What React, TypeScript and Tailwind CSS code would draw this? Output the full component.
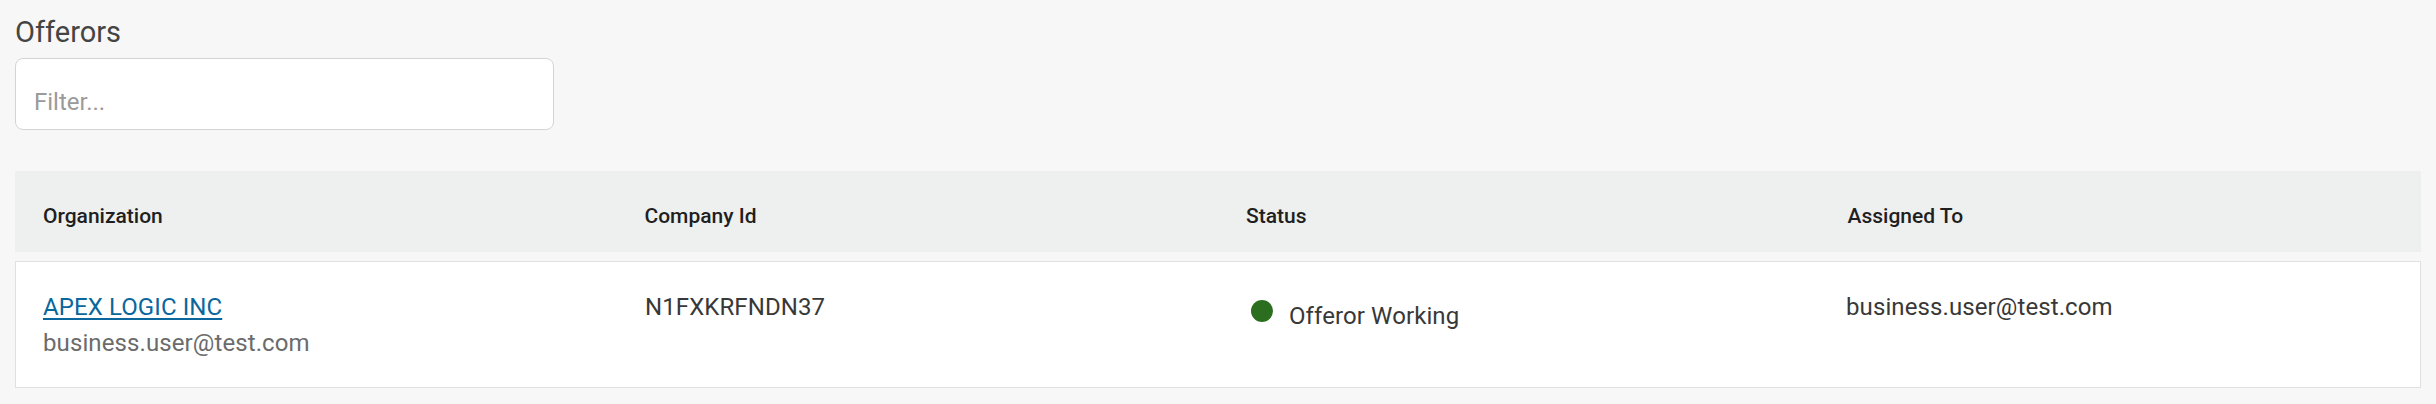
const font = { fontFamily: 'Roboto, "Noto Sans", sans-serif' };

const columns = ['Organization', 'Company Id', 'Status', 'Assigned To'];

export default function App() {
  return (
    <div className="min-h-[404px] w-full bg-[#f7f7f7] px-[15px] pt-[14px]" style={font}>
      <h1 className="text-[29px] leading-[36px] font-normal text-[#444]">Offerors</h1>
      <input
        type="text"
        placeholder="Filter..."
        className="mt-[8px] block h-[72px] w-[539px] rounded-[8px] border border-[#d4d4d4] bg-white pl-[18px] pt-[16px] text-[24px] text-[#333] placeholder:text-[#9a9a9a] outline-none"
      />

      <div className="mt-[41px] grid h-[81px] grid-cols-4 bg-[#eef0ef]">
        {columns.map(c => (
          <div key={c} className="pl-[28px] pt-[29px] text-[21px] leading-[32px] font-medium text-[#1f1f1f]">
            {c}
          </div>
        ))}
      </div>

      <div className="mt-[9px] grid h-[127px] grid-cols-4 border border-[#e0e0e0] bg-white text-[24px] leading-[36px] tracking-[0.1px]">
        <div className="pl-[27px] pt-[27px]">
          <a href="#" className="text-[#0a679c] underline underline-offset-[3px] decoration-[2px]">
            APEX LOGIC INC
          </a>
          <div className="text-[#6b6b6b]">business.user@test.com</div>
        </div>
        <div className="pl-[28px] pt-[27px] text-[#383838]">N1FXKRFNDN37</div>
        <div className="flex items-start pl-[33px] pt-[27px]">
          <span className="mt-[11px] h-[22px] w-[22px] shrink-0 rounded-full bg-[#2b6e1f]" />
          <span className="ml-[16px] mt-[9px] text-[#383838]">Offeror Working</span>
        </div>
        <div className="pl-[27px] pt-[27px] text-[#383838]">business.user@test.com</div>
      </div>
    </div>
  );
}
